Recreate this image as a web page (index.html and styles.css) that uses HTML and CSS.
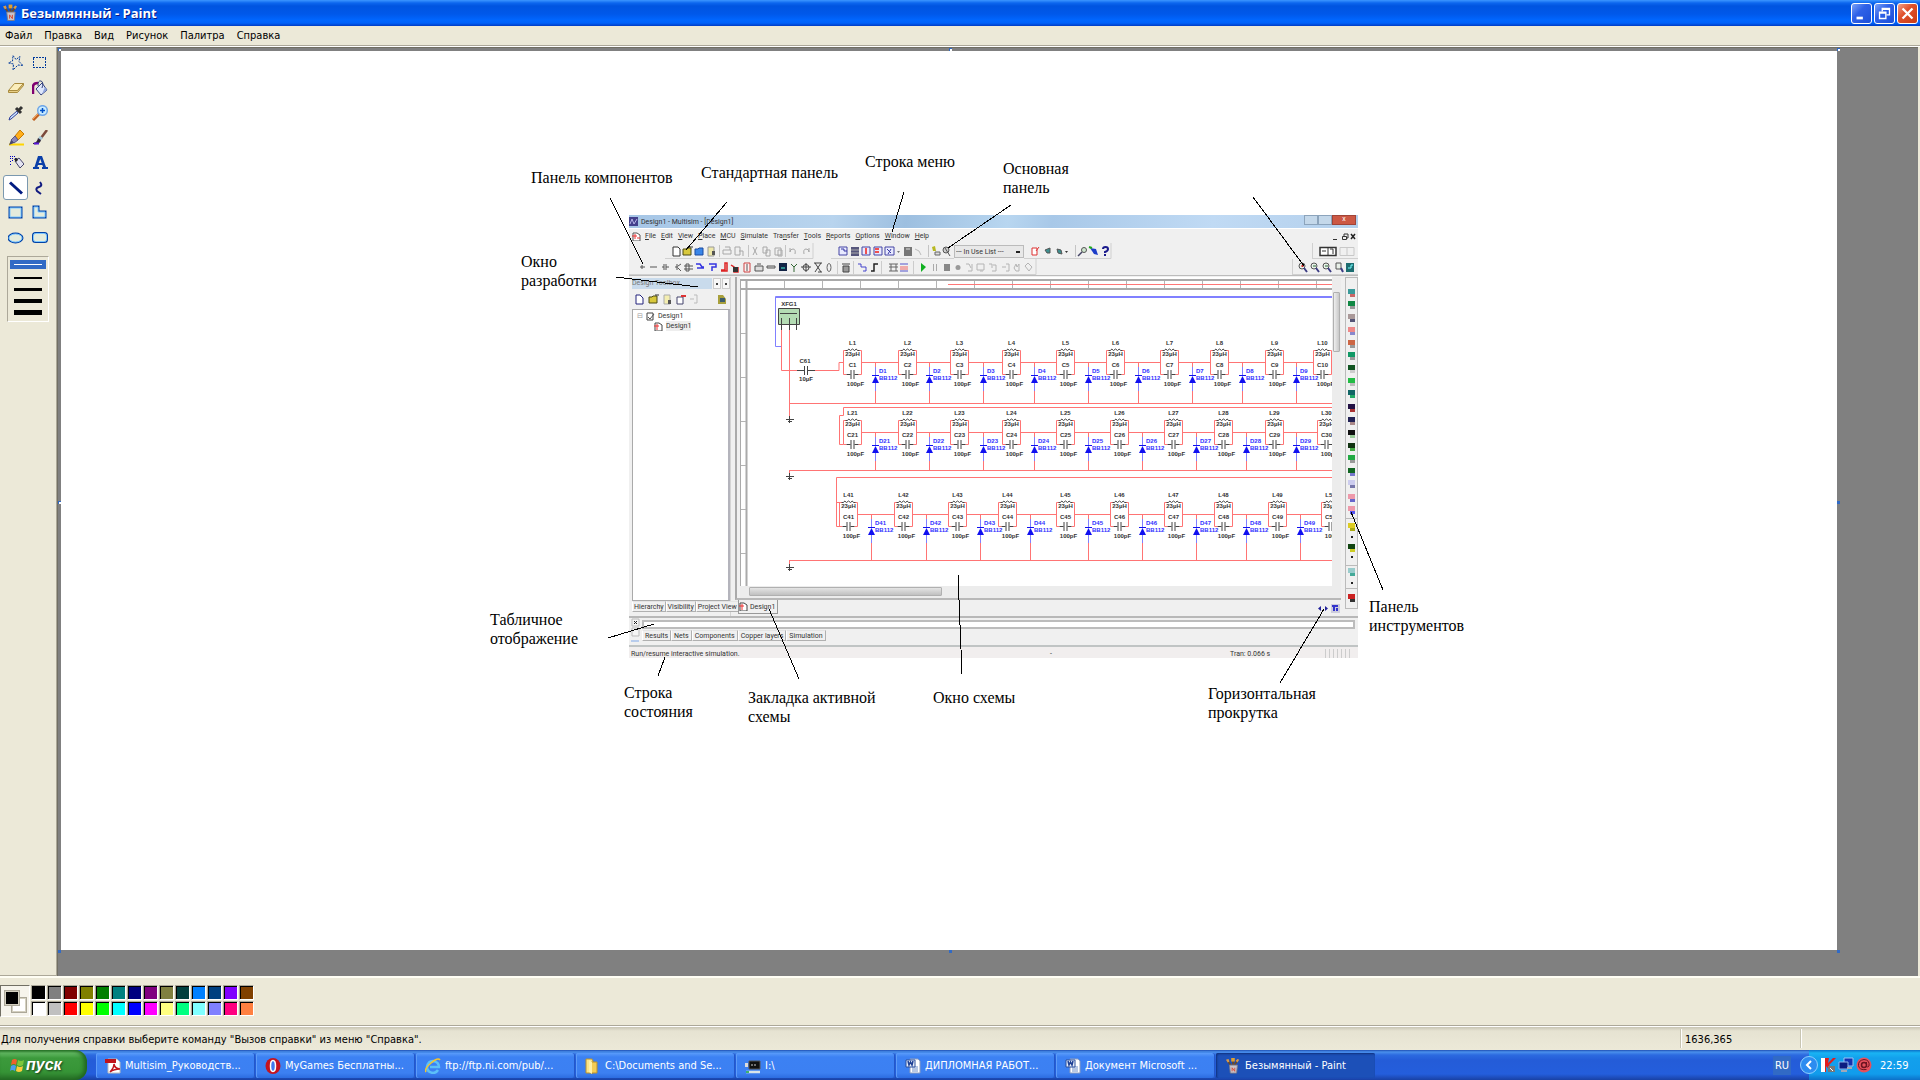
FILE: index.html
```html
<!DOCTYPE html>
<html lang="ru">
<head>
    <meta charset="UTF-8">
    <meta name="viewport" content="width=device-width, initial-scale=1.0">
    <title>Безымянный - Paint</title>
    <link rel="stylesheet" href="styles.css">
</head>
<body>
    <!-- Shared icons -->
    <svg class="defs" aria-hidden="true">
        <symbol id="paint" viewBox="0 0 16 18">
            <path d="M6 9L2 3M8 9V2M9 9l4-6" stroke="#6b4a2c" stroke-width="2"/>
            <path d="M0 2l3-1 1 3-2 1zM11 3l2-2 2 1-2 3z" fill="#d89a4a"/>
            <path d="M6 0h4v4H6z" fill="#e0a030"/>
            <path d="M4 8h9l-1 9H5z" fill="#c8c4cc" stroke="#7c7c88"/>
            <path d="M7 15v-4l3 4v-4" fill="none" stroke="#d8452c" stroke-width="1"/>
        </symbol>
        <symbol id="word" viewBox="0 0 16 16">
            <path d="M5 1h8l2 2v12H5z" fill="#fff" stroke="#8a9cc0"/>
            <path d="M7 9h6M7 11h6M7 13h6" stroke="#6f8fc8"/>
            <path d="M1 2h9v7H1z" fill="#e8eefa" stroke="#2b4f9c"/>
            <path d="M3 3l1 4 1.500-3L7 7l1-4" fill="none" stroke="#1d3f94" stroke-width="1.500"/>
        </symbol>
    </svg>

    <header class="titlebar">
        <svg class="title-icon"><use href="#paint"/></svg>
        <h1>Безымянный - Paint</h1>
        <button class="win-btn" aria-label="Свернуть"><svg viewBox="0 0 21 21"><path d="M5 14h7v3H5z" fill="#fff"/></svg></button>
        <button class="win-btn" aria-label="Восстановить"><svg viewBox="0 0 21 21"><path d="M8 8V5h8v7h-3M5 9h7v7H5zM5 10h7M8 6h8" fill="none" stroke="#fff" stroke-width="1.500"/></svg></button>
        <button class="win-btn close" aria-label="Закрыть"><svg viewBox="0 0 21 21"><path d="M5 5l11 11M16 5L5 16" stroke="#fff" stroke-width="2.500"/></svg></button>
    </header>

    <nav class="menubar">
        <a href="#">Файл</a>
        <a href="#">Правка</a>
        <a href="#">Вид</a>
        <a href="#">Рисунок</a>
        <a href="#">Палитра</a>
        <a href="#">Справка</a>
    </nav>

    <main class="editor">
        <aside class="toolbox">
            <div class="tools">
                <button aria-label="Выделение произвольной области"><svg viewBox="0 0 16 16"><path d="M5 .5l3 4 4-3-1 5 4 4-5-.5-5 5 .5-6-5-1 4-2z" fill="none" stroke="#003a9c" stroke-dasharray="2 1"/></svg></button>
                <button aria-label="Выделение"><svg viewBox="0 0 16 16"><path d="M1 2.500h13M1 12.500h13M1.500 3v10M13.500 3v10" fill="none" stroke="#003a9c" stroke-dasharray="2 1"/></svg></button>
                <button aria-label="Ластик"><svg viewBox="0 0 16 16"><path d="M.5 10.500l6-7h9l-6 7z" fill="#fbeebc" stroke="#a98b3e"/><path d="M.5 10.500v2h9l6-7v-2l-6 7z" fill="#e9cf86" stroke="#a98b3e"/></svg></button>
                <button aria-label="Заливка"><svg viewBox="0 0 16 16"><path d="M1 14V7q0-4 5-4" fill="none" stroke="#800070" stroke-width="2.500"/><path d="M4 9l6-6 5 7-6 5z" fill="#dfe7fb" stroke="#35437c"/><path d="M6 6q0-6 3-5t1 7" fill="none" stroke="#35437c"/><path d="M10 14l5-4-2-3z" fill="#8ea4de"/></svg></button>
                <button aria-label="Выбор цветов"><svg viewBox="0 0 16 16"><path d="M1 15l1-3 7-6 1 2-7 6z" fill="#cfe6ff" stroke="#30409c"/><path d="M8 3l5 5M10 6l4-4" stroke="#333" stroke-width="3"/></svg></button>
                <button aria-label="Масштаб"><svg viewBox="0 0 16 16"><path d="M1 15l6-6" stroke="#c06020" stroke-width="3"/><path d="M1 14l5-5" stroke="#f7a050"/><circle cx="10.500" cy="5.500" r="4.800" fill="#c9ecff" stroke="#6fa6e6" stroke-width="1.500"/><path d="M8 5.500h5M10.500 3v5" stroke="#0050c8" stroke-width="1.500"/></svg></button>
                <button aria-label="Карандаш"><svg viewBox="0 0 16 16"><path d="M1 14.500h15" stroke="#ffd400" stroke-width="2"/><path d="M7 6l5-6 4 4-6 6z" fill="#ffae1a" stroke="#c67a00"/><path d="M3 10l4-4 3 4-4 3z" fill="#8a86b8" stroke="#5a5684"/><path d="M1 15l2-5 3 3z" fill="#4a4870"/></svg></button>
                <button aria-label="Кисть"><svg viewBox="0 0 16 16"><path d="M9 8l6-8" stroke="#7c4a3c" stroke-width="2.500"/><path d="M7 7l3 2" stroke="#a7c8d8" stroke-width="3"/><path d="M1 13q4 0 5-5l3 2q-1 5-8 4z" fill="#2b2438"/><path d="M2 13.500h5" stroke="#5a18d8" stroke-width="2"/></svg></button>
                <button aria-label="Распылитель"><svg viewBox="0 0 16 16"><path d="M2 1h1v1H2zM4 1h1v1H4zM6 1h1v1H6zM2 3h1v1H2zM4 3h1v1H4zM2 6h1v1H2zM4 5h1v1H4zM2 9h1v1H2zM7 3h1v1H7z" fill="#0000c0"/><path d="M7 6l4-3 5 6-4 4z" fill="#e4e4f2" stroke="#44446c"/><path d="M6 4l3-1 1 2-2 2z" fill="#222"/></svg></button>
                <button aria-label="Надпись"><svg viewBox="0 0 16 16"><path d="M6 1h4l4 11h2v2h-6v-2h1l-.6-2H6l-.6 2H7v2H1v-2h1.500zM6.700 8h3L8.300 4z" fill="#0b3fa8" fill-rule="evenodd"/></svg></button>
                <button class="active" aria-label="Линия"><svg viewBox="0 0 16 16"><path d="M2 2.500l12 11" stroke="#001a80" stroke-width="3"/></svg></button>
                <button aria-label="Кривая"><svg viewBox="0 0 16 16"><path d="M8 2q3 4-1 5-4 1-2 4l4 3" fill="none" stroke="#101a80" stroke-width="2"/></svg></button>
                <button aria-label="Прямоугольник"><svg viewBox="0 0 16 16"><path d="M2 3h11v9H2z" fill="none" stroke="#0042a8" stroke-width="3"/><path d="M2 3h11v9H2z" fill="#e4ebdc" stroke="#7ec8ff"/></svg></button>
                <button aria-label="Многоугольник"><svg viewBox="0 0 16 16"><path d="M2 2h4v5h7v5H2z" fill="none" stroke="#0042a8" stroke-width="3"/><path d="M2 2h4v5h7v5H2z" fill="#e4ebdc" stroke="#7ec8ff"/></svg></button>
                <button aria-label="Эллипс"><svg viewBox="0 0 16 16"><ellipse cx="7.500" cy="8" rx="6.500" ry="4" fill="none" stroke="#0042a8" stroke-width="3"/><ellipse cx="7.500" cy="8" rx="6.500" ry="4" fill="#e4ebdc" stroke="#7ec8ff"/></svg></button>
                <button aria-label="Скругленный прямоугольник"><svg viewBox="0 0 16 16"><rect x="1.500" y="3.500" width="13" height="8" rx="2" fill="none" stroke="#0042a8" stroke-width="3"/><rect x="1.500" y="3.500" width="13" height="8" rx="2" fill="#e4ebdc" stroke="#7ec8ff"/></svg></button>
            </div>
            <div class="line-sizes">
                <button class="size size-1 active" aria-label="1"></button>
                <button class="size size-2" aria-label="2"></button>
                <button class="size size-3" aria-label="3"></button>
                <button class="size size-4" aria-label="4"></button>
                <button class="size size-5" aria-label="5"></button>
            </div>
        </aside>

        <div class="workspace">
            <div class="canvas">
                <!-- Pasted Multisim window -->
                <section class="multisim">
                    <div class="ms-title">
                        <svg class="ms-logo" viewBox="0 0 9 9"><path d="M0 0h9v9H0z" fill="#43408c"/><path d="M1 7l2-5 2 5 3-5" fill="none" stroke="#b7b4e8"/></svg>
                        <span>Design1 - Multisim - [Design1]</span>
                        <i></i><i></i><i class="ms-close">x</i>
                    </div>
                    <nav class="ms-menu">
                        <svg class="ms-doc" viewBox="0 0 9 9"><path d="M1 1h4l3 2v6H1z" fill="#fff" stroke="#555"/><path d="M0 4h5M3 2v5M5 6h3" stroke="#e33"/></svg>
                        <a href="#"><u>F</u>ile</a><a href="#"><u>E</u>dit</a><a href="#"><u>V</u>iew</a><a href="#"><u>P</u>lace</a><a href="#"><u>M</u>CU</a><a href="#"><u>S</u>imulate</a><a href="#">Tra<u>n</u>sfer</a><a href="#"><u>T</u>ools</a><a href="#"><u>R</u>eports</a><a href="#"><u>O</u>ptions</a><a href="#"><u>W</u>indow</a><a href="#"><u>H</u>elp</a>
                        <svg class="ms-mdi" viewBox="0 0 24 9"><path d="M1 7.500h4" stroke="#333"/><path d="M10.500 4.500h4v3h-4zM12 4V2h4v4h-1" fill="none" stroke="#333"/><path d="M19 2l4 5M23 2l-4 5" stroke="#222" stroke-width="1.500"/></svg>
                    </nav>
                    <div class="ms-tools">
                        <svg width="325" height="16">
                            <path d="M36 15.500h148V0M202 15.500h123" fill="none" stroke="#d0d0d0"/>
                            <path d="M44 4h5l2 2v7h-7z" fill="#fff" stroke="#333"/>
                            <path d="M54 6h3l1-1h4v7h-8z" fill="#d8c83c" stroke="#4c4a14"/><path d="M60 4h4" stroke="#333"/>
                            <path d="M66 6h3l1-1h4v7h-8z" fill="#3a86e8" stroke="#1a4aa0"/>
                            <path d="M79 4h6v9h-6z" fill="#eee8a8" stroke="#999"/><path d="M83 8h3v4h-3z" fill="#555"/>
                            <path d="M90.500 2v12M119.500 2v12M156.500 2v12M299.500 2v12" stroke="#c4c4c4"/>
                            <path d="M94 7h8v4h-8zM96 4h5v3M106 4h5v8h-5zM110 8h4v5M124 4l4 8M128 4l-4 8M134 4h4v6h-4zM137 7h4v6h-4zM146 5h6v7h-6zM149 7h4v6h-4zM161 5v4q0-3 3-3t2 5M180 5v4q0-3-3-3t-2 5" fill="none" stroke="#a8a8a8"/>
                            <path d="M210 4h8v8h-8zM245 4h8v8h-8zM256 4h9v8h-9zM233 4h8v8h-8z" fill="#e8eaff" stroke="#4444a4"/>
                            <path d="M222 4h8v9h-8z" fill="#56567c"/><path d="M222 7h8M222 10h8" stroke="#aaa"/>
                            <path d="M212 6h3v2h3M258 6l4 4M262 6l-3 5" fill="none" stroke="#3434a0"/><path d="M237 5v6M246 6h4M246 9h4" stroke="#f05050" stroke-width="2"/>
                            <path d="M268 8h3l-1.500 2zM275 4h8v9h-8z" fill="#777"/><path d="M277 6h4" stroke="#ddd"/>
                            <path d="M286 6l4 2 2 4" fill="none" stroke="#bbb"/>
                            <path d="M303 4l3-1 1 5h-3z" fill="#b8b820"/><path d="M306 9h5v3h-5z" fill="#ddd" stroke="#666"/>
                            <circle cx="317" cy="7" r="3" fill="#ccc" stroke="#555"/><path d="M316 5l5 8" stroke="#555"/>
                        </svg>
                        <select aria-label="In Use List"><option>--- In Use List ---</option></select>
                        <svg width="90" height="16">
                            <path d="M0 15.500h87V0" fill="none" stroke="#d0d0d0"/>
                            <path d="M8 5h5v7H8z" fill="#fff" stroke="#d33"/><path d="M12 8l3-4" stroke="#d33"/>
                            <path d="M21 7l5-2v5h-3zM33 6l4 1 1 4-4-1z" fill="#3c9090" stroke="#555"/>
                            <path d="M41 8h3l-1.500 2z" fill="#333"/><path d="M51.500 2v12" stroke="#c4c4c4"/>
                            <circle cx="60" cy="7" r="2.500" fill="#cfe6cf" stroke="#555"/><path d="M58 9l-4 4" stroke="#446" stroke-width="1.500"/>
                            <path d="M66 5l6 1 2 6-4-1z" fill="#1c3cc8"/><path d="M65 4l3 1" stroke="#2a2" stroke-width="2"/>
                            <path d="M79 6q0-2 2.500-2t2.500 2-3 3v1M81 11v2" fill="none" stroke="#1a1a8c" stroke-width="2"/>
                        </svg>
                        <svg class="ms-switch" width="46" height="16">
                            <path d="M0 15.500h46M.5 0v15" stroke="#d0d0d0"/>
                            <path d="M8 4.500h16v8H8z" fill="#fff" stroke="#333" stroke-width="1.500"/><path d="M16 4v8M10 8h4M18 6h3v5" fill="none" stroke="#333"/>
                            <path d="M28 4.500h14v8H28zM35 5v7" fill="none" stroke="#c8c8c8"/>
                        </svg>
                    </div>
                    <div class="ms-tools">
                        <svg width="408" height="17">
                            <path d="M0 15.500h407V0" fill="none" stroke="#d0d0d0"/>
                            <path d="M11 8h5M13 6v4M21 8h7M33 8h2M35 5v6M37 5v6M37 8h3M46 8h3M48 5v6M49 7l3-2M49 9l3 3M55 7h9M55 10h9M57 5v7h3V5z" fill="none" stroke="#555"/>
                            <path d="M67 5h4l2 3h2M68 9h7M80 5h7v3h-4v4" fill="none" stroke="#3434e0" stroke-width="1.500"/>
                            <path d="M92 11h4V4h2v8h-6M102 6l3 2v5h4V8" fill="none" stroke="#d22" stroke-width="1.500"/><path d="M104 8h5v5h-5z" fill="#333"/>
                            <path d="M115 4h6v9h-6z" fill="#fff0f0" stroke="#c44"/><path d="M118 5v7" stroke="#555"/>
                            <path d="M126 7h8v5h-8zM128 5h4M138 7h8v2h-8z" fill="#ddd" stroke="#555"/>
                            <path d="M150 4h8v8h-8z" fill="#124"/><path d="M152 9h4" stroke="#2c8c8c" stroke-width="2"/>
                            <path d="M162 5l3 3 3-3M165 8v5" fill="none" stroke="#363"/><circle cx="177" cy="8.500" r="3" fill="none" stroke="#444"/><path d="M172 8h10M177 4v9M186 4l6 9M192 4l-6 9M185 4h8M189 13h4" stroke="#444"/>
                            <ellipse cx="200" cy="8.500" rx="2" ry="4" fill="none" stroke="#666"/>
                            <path d="M208.500 2v13M224.500 2v13M252.500 2v13M284.500 2v13" stroke="#ccc"/>
                            <path d="M214 7h6v6h-6zM213 5h8" fill="#999" stroke="#444"/><path d="M229 5h3v3h5v4h-3" fill="none" stroke="#44c"/>
                            <path d="M242 12h3V5h4" fill="none" stroke="#222" stroke-width="1.500"/>
                            <path d="M260 5h9M260 8h9M260 12h9M262 5v7M267 5v7" stroke="#666"/><path d="M271 5h8M271 12h8" stroke="#55c"/><path d="M271 8h8M271 10h8" stroke="#e66"/>
                            <path d="M292 4l5 4-5 5z" fill="#10b020"/><path d="M304 5h1v7h-1zM307 5h1v7h-1z" fill="#aaa"/><path d="M315 5h6v7h-6z" fill="#888"/><circle cx="329" cy="8.500" r="2.500" fill="#999"/>
                            <path d="M337 5h3l2 4M343 5v7h-4M348 5h7v6h-7zM351 12h3M360 5h3v4M364 6h3v6h-4M373 8h4M377 5h3v7h-3M385 9l2-4 1 3 2-3v7h-3zM396 7l3-3 4 4-3 4z" fill="none" stroke="#b4b4b4"/>
                        </svg>
                        <svg class="ms-zooms" width="66" height="17">
                            <path d="M0 15.500h66M.5 0v15" stroke="#d0d0d0"/>
                            <g fill="#e8f0e8" stroke="#555"><circle cx="10" cy="7" r="3"/><circle cx="22" cy="7" r="3"/><circle cx="34" cy="7" r="3"/><path d="M44 4h5v6h-5z"/></g>
                            <path d="M12 9l3 4M24 9l3 4M36 9l3 4M49 9l2 4" stroke="#3c3c84" stroke-width="2"/><path d="M9 7h3M10.500 5v3" stroke="#c22"/><path d="M21 7h3M33 7h3" stroke="#2a6c3a"/>
                            <path d="M54 4h8v9h-8z" fill="#1c6c70"/><path d="M56 9h3V6h2" fill="none" stroke="#7ff"/>
                        </svg>
                    </div>

                    <div class="ms-main">
                        <div class="dock">
                            <div class="dock-head"><span>Design Toolbox</span><b></b><b></b></div>
                            <svg class="dock-tools" viewBox="0 0 97 20">
                                <path d="M4 6h4l3 3v6H4z" fill="#fff" stroke="#22227c"/><path d="M17 8h3l1-1h4v7h-8z" fill="#d8c83c" stroke="#4c4a14"/><path d="M23 6h4" stroke="#333"/>
                                <path d="M32 6h6v9h-6z" fill="#f4eeb0" stroke="#aaa"/><path d="M36 11h3v4h-3z" fill="#555"/><path d="M45 8h6v7h-6z" fill="#fff" stroke="#44446c" /><path d="M49 7h5" stroke="#d33" stroke-width="2"/>
                                <path d="M62 6h3v8h-3M58 10h4" fill="none" stroke="#bbb"/><path d="M86 6h5l3 4v5h-8z" fill="#a8a03c"/><path d="M88 9h5v4h-5z" fill="#3c5c6c"/>
                            </svg>
                            <div class="tree">
                                <p><em>⊟</em><svg viewBox="0 0 9 9"><path d="M1 1h6v7H1z" fill="#fff" stroke="#444"/><path d="M2 5l2 2 4-5" fill="none" stroke="#555"/></svg>Design1</p>
                                <p class="leaf"><svg viewBox="0 0 9 9"><path d="M1 1h4l3 2v6H1z" fill="#fff" stroke="#444"/><path d="M0 4h5M3 2v6" stroke="#e33"/></svg><span>Design1</span></p>
                            </div>
                            <div class="ms-tabs"><button class="active">Hierarchy</button><button>Visibility</button><button>Project View</button></div>
                        </div>
                        <div class="doc">
                            <svg id="schematic" viewBox="740 277 592 309" preserveAspectRatio="xMinYMin slice"></svg>
                            <div class="vscroll"><i></i></div>
                            <div class="hscroll"><i></i></div>
                        </div>
                        <svg class="instruments" id="instruments" viewBox="0 0 11 330" preserveAspectRatio="xMinYMin slice"></svg>
                        <div class="doc-tab"><button><svg viewBox="0 0 9 9"><path d="M1 1h4l3 2v6H1z" fill="#fff" stroke="#444"/><path d="M0 4h5M3 2v6" stroke="#e33"/></svg>Design1</button>
                            <svg class="doc-nav" viewBox="0 0 25 9"><path d="M5 2v5L2 4.500zM9 2v5l3-2.500z" fill="#22229c"/><path d="M15 0h9v9h-9z" fill="#ccd"/><path d="M16 2h6M18 2v5M21 4v3" stroke="#33c" stroke-width="2"/></svg>
                        </div>
                    </div>

                    <div class="sheet-view">
                        <svg class="grip" viewBox="0 0 10 26"><path d="M2 1h7v7H2zM2 10h7v8H2z" fill="#f4f4f4" stroke="#bbb"/><path d="M4 3l3 3M7 3L4 6" stroke="#222"/><path d="M1 23h8" stroke="#b8ccec" stroke-width="2"/></svg>
                        <div class="sheet-body">
                            <div class="sheet-row"></div>
                            <div class="ms-tabs"><button class="active">Results</button><button>Nets</button><button>Components</button><button>Copper layers</button><button>Simulation</button></div>
                        </div>
                    </div>
                    <div class="ms-status"><span>Run/resume interactive simulation.</span><span>-</span><span>Tran: 0.066 s</span><span class="meter"></span></div>
                </section>

                <!-- Labels drawn around it -->
                <p class="note n-components">Панель компонентов</p>
                <p class="note n-standard">Стандартная панель</p>
                <p class="note n-menu">Строка меню</p>
                <p class="note n-main">Основная<br>панель</p>
                <p class="note n-design">Окно<br>разработки</p>
                <p class="note n-table">Табличное<br>отображение</p>
                <p class="note n-status">Строка<br>состояния</p>
                <p class="note n-tab">Закладка активной<br>схемы</p>
                <p class="note n-circuit">Окно схемы</p>
                <p class="note n-scroll">Горизонтальная<br>прокрутка</p>
                <p class="note n-tools">Панель<br>инструментов</p>
                <svg class="pointers">
                    <path d="M549 147l33 66M666 151l-41 48M843 141l-12 40M950 154l-63 43M1192 146l51 69M555 226l82 10M547 587l46-14M604 606l-7 19M708 558l30 70M897 524l4 99M1263 558l-44 74M1290 461l32 78"/>
                </svg>
                <i class="handle tl"></i><i class="handle tc"></i><i class="handle tr"></i>
                <i class="handle ml"></i><i class="handle mr"></i>
                <i class="handle bl"></i><i class="handle bc"></i><i class="handle br"></i>
            </div>
        </div>
    </main>

    <section class="palette">
        <div class="current"><i class="back"></i><i class="fore"></i></div>
        <div class="colors" id="colors"></div>
    </section>

    <footer class="statusbar">
        <span class="hint">Для получения справки выберите команду "Вызов справки" из меню "Справка".</span>
        <span class="coords">1636,365</span>
        <span class="extent"></span>
    </footer>

    <div class="taskbar">
        <button class="start">
            <svg viewBox="0 0 16 16"><path d="M2 3q3-2 5 0L6 8Q4 6 1 8z" fill="#f0602c"/><path d="M8 3q3 2 6 0l-1 5q-3 2-6 0z" fill="#7cc83c"/><path d="M1 9q3-2 5 0l-1 5q-3-2-5 0z" fill="#4c9cf0"/><path d="M7 9q3 2 6 0l-1 5q-3 2-6 0z" fill="#fccc3c"/></svg>
            пуск
        </button>
        <div class="tasks">
            <button><svg viewBox="0 0 16 16"><path d="M3 1h9l3 3v11H3z" fill="#fff" stroke="#bbb"/><path d="M0 1h11v4H0z" fill="#c0141c"/><path d="M5 14q4-4 4-8 1 5 6 5-6 0-10 3z" fill="none" stroke="#c0141c" stroke-width="1.500"/></svg><span>Multisim_Руководств...</span></button>
            <button><svg viewBox="0 0 16 16"><ellipse cx="8" cy="8" rx="7.500" ry="8" fill="#c41420"/><ellipse cx="8" cy="8" rx="2.500" ry="5.500" fill="#3f7af0" stroke="#fff" stroke-width="1.500"/></svg><span>MyGames Бесплатны...</span></button>
            <button><svg viewBox="0 0 16 16"><path d="M13 12q-2 3-5 3-6-1-6-6 1-6 6-6 6 1 6 6H5" fill="none" stroke="#5cc0f8" stroke-width="2.500"/><path d="M1 14Q-1 11 6 5t9-3" fill="none" stroke="#f4c430" stroke-width="1.500"/></svg><span>ftp://ftp.ni.com/pub/...</span></button>
            <button><svg viewBox="0 0 16 16"><path d="M1 1h6l1 2v12H1z" fill="#fbe488" stroke="#b8902c"/><path d="M6 4h6v11H6z" fill="#f4cc54" stroke="#b8902c"/><path d="M4 2l3 2v12l-3-2z" fill="#fff0a8"/></svg><span>C:\Documents and Se...</span></button>
            <button><svg viewBox="0 0 16 16"><path d="M4 3h11v8H4z" fill="#111" stroke="#555"/><path d="M0 5h3v4H0z" fill="#ddd"/><path d="M6 7h6" stroke="#ccc" stroke-dasharray="2 1"/><path d="M1 14h14" stroke="#d8e4e8" stroke-width="2.500"/><path d="M1 14h3" stroke="#3cb46c" stroke-width="2"/></svg><span>I:\</span></button>
            <button><svg><use href="#word"/></svg><span>ДИПЛОМНАЯ РАБОТ...</span></button>
            <button><svg><use href="#word"/></svg><span>Документ Microsoft ...</span></button>
            <button class="active"><svg><use href="#paint"/></svg><span>Безымянный - Paint</span></button>
        </div>
        <button class="lang">RU</button>
        <div class="tray">
            <button class="expand" aria-label="Показать значки"><svg viewBox="0 0 18 18"><circle cx="9" cy="9" r="8.500" fill="#2c8cf0" stroke="#8cd0ff"/><path d="M11 5L7 9l4 4" fill="none" stroke="#fff" stroke-width="2"/></svg></button>
            <svg viewBox="0 0 16 16"><path d="M1 1h4v14H1z" fill="#fff"/><path d="M5 1h4L8 6l5-5h3L9 8l6 7h-4L6 9v6H5z" fill="#e01c1c"/><path d="M8 9h7v6H8z" fill="#777"/><path d="M10 11l3 3" stroke="#fff"/></svg>
            <svg viewBox="0 0 16 16"><path d="M6 1h9v8H6z" fill="#1430b0" stroke="#9cc4f4"/><path d="M1 5h9v7H1z" fill="#0c1c80" stroke="#8cb4ec"/><path d="M3 14h6M9 11h5" stroke="#a0a8b8" stroke-width="2"/></svg>
            <svg viewBox="0 0 16 16"><circle cx="8" cy="8" r="7.500" fill="#e8505c"/><circle cx="8" cy="8" r="2.500" fill="none" stroke="#6c1420" stroke-width="1.500"/><path d="M10.500 5v4q1 2 2.500 0 1-6-5-6.500-6 1-5.500 6t8 4" fill="none" stroke="#6c1420"/></svg>
            <time>22:59</time>
        </div>
    </div>
    <script src="script.js"></script>
</body>
</html>
```
FILE: styles.css
```css
* {
    box-sizing: border-box;
}

body {
    margin: 0;
    height: 100vh;
    display: flex;
    flex-direction: column;
    overflow: hidden;
    background-color: #ece9d8;
    color: #000;
    font-family: "DejaVu Sans Condensed", "DejaVu Sans", sans-serif;
    font-size: 11px;
}

button {
    font: inherit;
    color: inherit;
    padding: 0;
    border: none;
    background: none;
}

a {
    color: inherit;
    text-decoration: none;
}

p, h1 {
    margin: 0;
}

svg {
    display: block;
    flex: none;
}

.defs {
    position: absolute;
    width: 0;
    height: 0;
}

/* Title bar */
.titlebar {
    height: 26px;
    flex: none;
    display: flex;
    align-items: center;
    gap: 2px;
    padding: 0 2px 0 3px;
    background: linear-gradient(#3c96ff 0, #0c66ee 3px, #0054e0 6px, #0058ea 14px, #0066ff 20px, #0062fa 23px, #003cc4 26px);
}

.title-icon {
    width: 15px;
    height: 18px;
}

.titlebar h1 {
    flex: 1;
    padding-left: 1px;
    font-family: "Open Sans", sans-serif;
    font-size: 13px;
    line-height: 26px;
    color: #fff;
    text-shadow: 1px 1px #0a1883;
}

.win-btn {
    width: 21px;
    height: 21px;
    border: 1px solid #fff;
    border-radius: 3px;
    background: linear-gradient(135deg, #7ba2f7, #2f62e8 40%, #1c4fd8);
}

.win-btn svg {
    width: 19px;
    height: 19px;
}

.win-btn.close {
    background: linear-gradient(135deg, #f0a18a, #e0512c 40%, #c83c14);
}

/* Menu */
.menubar {
    height: 20px;
    flex: none;
    display: flex;
    gap: 12px;
    padding-left: 5px;
    line-height: 19px;
    border-bottom: 1px solid #aca899;
}

/* Work area */
.editor {
    flex: 1;
    display: flex;
    min-height: 0;
    border-top: 1px solid #fff;
    border-bottom: 2px solid #fffef4;
}

.toolbox {
    width: 57px;
    flex: none;
    padding: 3px 0 0 3px;
    border-right: 1px solid #aca899;
    border-bottom: 1px solid #aca899;
}

.tools {
    display: grid;
    grid-template-columns: 25px 24px;
    grid-auto-rows: 25px;
}

.tools button {
    display: grid;
    place-items: center;
    border: 1px solid transparent;
    border-radius: 3px;
}

.tools button.active {
    background-color: #fff;
    border-color: #7a98af;
}

.tools svg {
    width: 16px;
    height: 16px;
}

.line-sizes {
    width: 42px;
    height: 66px;
    margin: 6px 0 0 4px;
    padding: 3px 2px;
    display: flex;
    flex-direction: column;
    border: 1px solid;
    border-color: #aca899 #fff #fff #aca899;
}

.size {
    height: 12px;
    padding: 0 4px;
}

.size.active {
    height: 10px;
    margin-bottom: 3px;
    color: #fff;
    background-color: #316ac5;
}

.size::before {
    content: "";
    display: block;
    height: 1px;
    background-color: currentColor;
}

.size-2::before { height: 2px; }
.size-3::before { height: 3px; }
.size-4::before { height: 4px; }
.size-5::before { height: 5px; }

.workspace {
    flex: 1;
    display: flex;
    padding: 3px 81px 26px 3px;
    margin-right: 2px;
    background-color: #808080;
    border-top: 1px solid #716f64;
    border-left: 1px solid #716f64;
}

.canvas {
    flex: 1;
    position: relative;
    background-color: #fff;
}

.handle {
    position: absolute;
    width: 3px;
    height: 3px;
    background-color: #fff;
    border: solid #316ac5;
    border-width: 1px 0 0 1px;
}

.tl, .tc, .tr { top: -3px; }
.bl, .bc, .br { bottom: -3px; background-color: #316ac5; }
.ml, .mr { top: 50%; }
.mr { background-color: #316ac5; }
.tl, .ml, .bl { left: -3px; }
.tc, .bc { left: 50%; }
.tr, .mr, .br { right: -3px; }

/* Labels and pointer lines */
.note {
    position: absolute;
    font-family: "Liberation Serif", serif;
    font-size: 16px;
    line-height: 19px;
    white-space: nowrap;
}

.n-components { left: 470px; top: 117px; }
.n-standard { left: 640px; top: 112px; }
.n-menu { left: 804px; top: 101px; }
.n-main { left: 942px; top: 108px; }
.n-design { left: 460px; top: 201px; }
.n-table { left: 429px; top: 559px; }
.n-status { left: 563px; top: 632px; }
.n-tab { left: 687px; top: 637px; }
.n-circuit { left: 872px; top: 637px; }
.n-scroll { left: 1147px; top: 633px; }
.n-tools { left: 1308px; top: 546px; }

.pointers {
    position: absolute;
    left: 0;
    top: 0;
    width: 100%;
    height: 100%;
    fill: none;
    stroke: #000;
    shape-rendering: crispEdges;
}

/* Multisim picture */
.multisim {
    position: absolute;
    left: 568px;
    top: 164px;
    width: 729px;
    height: 443px;
    display: flex;
    flex-direction: column;
    overflow: hidden;
    background-color: #f0f0f0;
    color: #333;
    font-family: Roboto, sans-serif;
    font-size: 7px;
    line-height: 10px;
    white-space: nowrap;
}

.ms-title {
    height: 13px;
    flex: none;
    display: flex;
    align-items: center;
    padding-right: 2px;
    background: linear-gradient(100deg, #a6c6e6 0, #b8d4ee 28%, #9dbfe0 38%, #b8d6f0 52%, #a8c8e8 58%, #c0daf4 80%, #b4d0ec);
}

.ms-logo, .ms-doc {
    width: 9px;
    height: 9px;
    margin-right: 3px;
}

.ms-title span {
    flex: 1;
}

.ms-title i {
    width: 14px;
    height: 10px;
    align-self: flex-start;
    border: 1px solid #8ca4bc;
    background-color: #c4d8ea;
}

.ms-title .ms-close {
    width: 24px;
    border-color: #a04438;
    background-color: #cc5844;
    color: #fff;
    line-height: 7px;
    text-align: center;
    font-style: normal;
}

.ms-menu {
    height: 15px;
    flex: none;
    display: flex;
    align-items: center;
    gap: 5px;
    padding-left: 3px;
    border-top: 1px solid #fff;
}

.ms-doc {
    margin-right: -1px;
}

.ms-mdi {
    width: 24px;
    height: 9px;
    margin: 0 2px 0 auto;
}

.ms-tools {
    height: 16px;
    flex: none;
    display: flex;
}

.ms-tools select {
    appearance: none;
    width: 70px;
    height: 13px;
    margin-top: 2px;
    padding: 0 1px;
    border: 1px solid #bbb;
    background: linear-gradient(#222, #222) right 3px center / 4px 2px no-repeat #e8e8e8;
    font: inherit;
    color: inherit;
}

.ms-switch, .ms-zooms {
    margin-left: auto;
}

.ms-main {
    height: 343px;
    flex: none;
    display: grid;
    grid-template-columns: 102px 1fr 13px;
    grid-template-rows: 1fr 16px;
    column-gap: 4px;
    padding-top: 1px;
    border-top: 1px solid #bcbcbc;
    border-bottom: 2px solid #b8b8b8;
}

.dock {
    grid-row: 1 / 3;
    display: flex;
    flex-direction: column;
    padding: 1px 0 4px 3px;
    border-right: 1px solid #d4d4d4;
}

.dock-head {
    height: 11px;
    flex: none;
    display: flex;
}

.dock-head span {
    flex: 1;
    background-color: #c9dbec;
    color: #777;
}

.dock-head b {
    width: 8px;
    margin-left: 1px;
    border: 1px solid #ccc;
    background: linear-gradient(#444, #444) center / 2px 2px no-repeat #f8f8f8;
}

.dock-tools {
    width: 97px;
    height: 20px;
}

.tree {
    flex: 1;
    padding: 1px 4px;
    background-color: #fff;
    border: 1px solid #aaa;
    border-right: 2px solid #b4b4bc;
}

.tree p {
    display: flex;
    align-items: center;
    gap: 3px;
}

.tree svg {
    width: 9px;
    height: 9px;
}

.tree em {
    color: #999;
    font-style: normal;
}

.tree .leaf {
    padding-left: 17px;
}

.leaf span {
    background-color: #eee;
}

.ms-tabs {
    display: flex;
    flex: none;
}

.ms-tabs button {
    height: 11px;
    padding: 0 2px;
    border: 1px solid #b0b0b0;
    border-top-color: #e4e4e4;
    border-left-color: #fff;
    background-color: #f0f0f0;
    line-height: 8px;
}

.dock .ms-tabs button {
    padding: 0 1px;
}

.doc {
    display: grid;
    grid-template-columns: 1fr 9px;
    grid-template-rows: 1fr 12px;
    padding: 0 0 0 3px;
    border-left: 2px solid #aaa;
    border-bottom: 2px solid #b8b8b8;
    min-width: 0;
    min-height: 0;
}

#schematic {
    width: 100%;
    height: 100%;
    min-height: 0;
    font-family: "Liberation Sans", sans-serif;
    font-size: 6px;
    font-weight: bold;
    text-anchor: middle;
}

.wire { fill: none; stroke: #ff7474; }
.ink { fill: none; stroke: #444; }
.tick { fill: none; stroke: #b4b4b4; }
.blue { fill: none; stroke: #8080ff; }
.part { fill: #333; }
.diode { fill: #1010f0; }
.diode-label { fill: #3030ff; text-anchor: start; }

.vscroll, .hscroll {
    background-color: #ececec;
}

.vscroll {
    padding: 15px 1px;
}

.hscroll {
    grid-column: 1 / 3;
    padding: 1px 9px;
}

.vscroll i, .hscroll i {
    display: block;
    border: 1px solid #b0b0b0;
    border-radius: 1px;
}

.vscroll i {
    height: 60px;
    background: linear-gradient(90deg, #eee, #c8c8c8);
}

.hscroll i {
    width: 193px;
    height: 9px;
    background: linear-gradient(#e4e4e4, #c0c0c0);
}

.instruments {
    width: 13px;
    height: 332px;
    grid-column: 3;
    grid-row: 1 / 3;
    border: 1px solid #bbb;
}

.doc-tab {
    grid-column: 2;
    grid-row: 2;
    display: flex;
    align-items: flex-start;
    justify-content: space-between;
}

.doc-tab button {
    display: flex;
    align-items: center;
    gap: 2px;
    height: 14px;
    margin-left: 3px;
    padding-right: 2px;
    border: 1px solid #999;
    border-top: none;
    background-color: #f0f0f0;
}

.doc-tab button svg {
    width: 9px;
    height: 9px;
}

.doc-nav {
    width: 25px;
    height: 9px;
    margin-top: 4px;
}

.sheet-view {
    height: 29px;
    flex: none;
    display: flex;
    border-bottom: 2px solid #c0c4c4;
}

.grip {
    width: 12px;
    height: 26px;
}

.sheet-body {
    flex: 1;
    padding: 2px 3px 0 1px;
}

.sheet-row {
    height: 9px;
    margin-bottom: 1px;
    border: 2px solid #bcbcbc;
    background-color: #fff;
}

.ms-status {
    flex: 1;
    display: grid;
    grid-template-columns: 419px 180px 95px 28px;
    padding: 2px 0 0 2px;
    background-color: #f1eeee;
}

.meter {
    background: repeating-linear-gradient(90deg, #ccc 0 1px, #f1eeee 1px 4px);
}

/* Palette */
.palette {
    height: 48px;
    flex: none;
    display: flex;
    align-items: flex-start;
    gap: 1px;
    padding-top: 7px;
    border-bottom: 1px solid #aca899;
}

.current {
    position: relative;
    width: 30px;
    height: 32px;
    border: 1px solid;
    border-color: #716f64 #fff #fff #716f64;
    background-color: #f6f4ec;
}

.current i {
    position: absolute;
    width: 14px;
    height: 14px;
    border: 1px solid #d4d0c0;
    outline: 1px solid #aca899;
}

.fore {
    left: 4px;
    top: 5px;
    background-color: #000;
}

.back {
    left: 11px;
    top: 12px;
    background-color: #fff;
}

.colors {
    display: grid;
    grid-template-columns: repeat(14, 16px);
    grid-auto-rows: 16px;
}

.colors button {
    margin: 0 1px 1px 0;
    border: 1px solid;
    border-color: #aca899 #fff #fff #aca899;
    box-shadow: inset 1px 1px #000;
}

/* Status bar */
.statusbar {
    height: 24px;
    flex: none;
    display: flex;
    padding: 2px 0;
    line-height: 22px;
    border-top: 1px solid #fff;
    background: linear-gradient(#c8c5b4 0, #e6e3d2 4px, #ece9d8);
}

.hint {
    flex: 1;
    padding-left: 1px;
}

.coords, .extent {
    width: 120px;
    padding-left: 4px;
    border-left: 1px solid #c8c5b2;
    box-shadow: inset 1px 0 #fff;
}

/* Taskbar */
.taskbar {
    height: 30px;
    flex: none;
    display: flex;
    color: #fff;
    background: linear-gradient(#1f4fb4 0, #4a90ec 2px, #2c6ae0 5px, #245cd8 10px, #245edc 24px, #1941a5 30px);
}

.start {
    width: 87px;
    height: 30px;
    display: flex;
    align-items: center;
    padding-left: 10px;
    border-radius: 0 12px 12px 0;
    background: linear-gradient(#2c7a2c, #62b862 3px, #3c9a3c 8px, #369436 22px, #266e26);
    box-shadow: inset -3px 0 4px #1f641f;
    font-family: "Liberation Sans", sans-serif;
    font-size: 16px;
    font-weight: bold;
    font-style: italic;
    text-shadow: 1px 1px 2px #1a3c1a;
}

.start svg {
    width: 16px;
    height: 16px;
}

.tasks {
    flex: 1;
    display: flex;
    gap: 1px;
    padding: 3px 0 2px 9px;
}

.tasks button {
    width: 159px;
    display: flex;
    align-items: center;
    gap: 4px;
    padding-left: 9px;
    border-radius: 2px;
    background: linear-gradient(#5a9cfa, #3c81f3 4px, #3c80f2 20px, #2c6ce0);
    box-shadow: inset 1px 0 #5e9cf8, inset -1px 0 #2458c8;
    white-space: nowrap;
}

.tasks button.active {
    background: #1c50b8;
    box-shadow: inset 1px 1px 2px #10307c;
}

.tasks svg {
    width: 16px;
    height: 16px;
}

.lang {
    width: 18px;
    height: 19px;
    margin: 6px 18px 0 0;
    background-color: #316ac5;
}

.tray {
    width: 111px;
    display: flex;
    align-items: center;
    gap: 2px;
    background: linear-gradient(#0c70c8, #19b4f4 3px, #12a0ec 8px, #119cec 24px, #0c70c8);
}

.tray svg {
    width: 16px;
    height: 16px;
}

.tray .expand {
    margin-left: -9px;
}

.tray .expand svg {
    width: 18px;
    height: 18px;
}

.tray time {
    padding-left: 6px;
}
```
FILE: script.js
```js
// Palette swatches
const colors = [
    '#000000', '#808080', '#800000', '#808000', '#008000', '#008080', '#000080', '#800080', '#808040', '#004040', '#0080ff', '#004080', '#8000ff', '#804000',
    '#ffffff', '#c0c0c0', '#ff0000', '#ffff00', '#00ff00', '#00ffff', '#0000ff', '#ff00ff', '#ffff80', '#00ff80', '#80ffff', '#8080ff', '#ff0080', '#ff8040'
];
document.getElementById('colors').innerHTML = colors
    .map(c => `<button style="background-color: ${c}" aria-label="${c}"></button>`)
    .join('');

// Three rows of LC cells with a diode after each cell
const rows = [
    { first: 1, y: 0, bus: 403.5, cells: [843, 898, 950, 1002, 1056, 1106, 1160, 1210, 1265, 1313], diodes: [875, 929, 983, 1034, 1088, 1138, 1192, 1242, 1296] },
    { first: 21, y: 70, bus: 470.5, cells: [843, 898, 950, 1002, 1056, 1110, 1164, 1214, 1265, 1317], diodes: [875, 929, 983, 1034, 1088, 1142, 1196, 1246, 1296] },
    { first: 41, y: 152, bus: 560.5, cells: [839, 894, 948, 998, 1056, 1110, 1164, 1214, 1268, 1321], diodes: [871, 926, 980, 1030, 1088, 1142, 1196, 1246, 1300] }
];

function path(cls, d) {
    return `<path class="${cls}" d="${d}"/>`;
}

function label(cls, x, y, text) {
    return `<text class="${cls}" x="${x}" y="${y}">${text}</text>`;
}

function cell(x, y, n) {
    return path('wire', `M${x + 3} ${y + 350.5}H${x}v24h3M${x + 15} ${y + 350.5}h3v24h-3`)
        + path('ink', `M${x + 2} ${y + 350.5}h2q1-3 3 0q2-3 4 0q2-3 3 0h2M${x + 3} ${y + 374.5}h4M${x + 11} ${y + 374.5}h4M${x + 7.5} ${y + 370}v9M${x + 10.5} ${y + 370}v9`)
        + label('part', x + 9, y + 345, 'L' + n)
        + label('part', x + 9, y + 356, '23µH')
        + label('part', x + 9, y + 367, 'C' + n)
        + label('part', x + 12, y + 386, '100pF');
}

function diode(x, y, n, bus) {
    return path('wire', `M${x + .5} ${y + 362}V${bus}`)
        + path('blue', `M${x + .5} ${y + 367}v24`)
        + path('diode', `M${x - 3} ${y + 383}l3-6h1l3 6zM${x - 3} ${y + 375}h7v1h-7z`)
        + label('diode-label', x + 4, y + 373, 'D' + n)
        + label('diode-label', x + 4, y + 380, 'BB112');
}

let out = '<path fill="#fff" d="M739 277h594v310H739z"/>';

// rulers
out += '<path fill="none" stroke="#aaa" stroke-width="2" d="M739 280h594M739 289h594M740 279v307M746.500 279v307"/>';
for (let x = 785; x < 1333; x += 38) out += path('tick', `M${x - .5} 281v7`);
for (let y = 333; y < 586; y += 44) out += path('tick', `M741 ${y + .5}h5`);
out += '<path stroke="#f77" d="M948 284.500h385"/>';

// generator and input wiring
out += path('blue', 'M781.500 346.500h-6V296.500H1333M775.500 297.500H1333');
out += path('wire', 'M781.500 328v42.500h17M814 370.500h25v-8h4M789.500 328v91');
out += '<path fill="#b4dcb4" stroke="#444" d="M778.500 308.500h21v16h-21z"/>';
out += path('ink', 'M797 370.500h7M804.500 366v9M807.500 366v9M808 370.500h7');
out += path('ink', 'M781.500 318v12M789.500 318v12M796.500 318v12M780 313.500h17');
out += label('part', 789, 306, 'XFG1') + label('part', 805, 363, 'C61') + label('part', 806, 381, '10µF');

for (const r of rows) {
    out += path('wire', `M${r.cells[0] + 18} ${r.y + 362.5}H1333M789 ${r.bus}H1333`);
    r.cells.forEach(x => {
        out += `<path fill="#fff" d="M${x} ${r.y + 348}h18v30h-18z"/>`;
    });
    r.cells.forEach((x, i) => { out += cell(x + .5, r.y, r.first + i); });
    r.diodes.forEach((x, i) => { out += diode(x, r.y, r.first + i, r.bus); });
}

out += path('wire', 'M1333 407.500H843.500v8h-4v29h4M1333 477.500H836.500v49h4M836.500 502.500h4M789.500 470v6M789.500 560v6');
for (const y of [419, 476, 567]) out += path('ink', `M786 ${y + .5}h8M788 ${y + 2.5}h4M789.500 ${y - 3}v7`);
document.getElementById('schematic').innerHTML = out;

// Instrument column
const meters = [
    [15, '#3a9a9a', '#c66'], [27, '#184', '#999'], [40, '#a99', '#557'], [53, '#e88', '#88c'], [66, '#c64', '#999'], [78, '#196', '#999'],
    [91, '#152', '#ccc'], [104, '#2b4', '#bbb'], [116, '#166', '#2a6'], [130, '#214', '#a33'], [143, '#225', '#a88'], [156, '#111', '#9c9'],
    [169, '#131', '#4a4'], [181, '#2a4', '#999'], [194, '#162', '#77c'], [206, '#cce', '#77a'], [220, '#e9a', '#66c'], [232, '#e9a', '#55e'],
    [249, '#dc2', '#aa1'], [270, '#141', '#cc2'], [294, '#9cc', '#4a9'], [320, '#c22', '#333']
];
document.getElementById('instruments').innerHTML = meters
    .map(([y, top, bottom]) => `<path fill="${top}" d="M2 ${y - 4}h7v5h-7z"/><path fill="${bottom}" d="M4 ${y + 1}h5v3h-5z"/>`)
    .join('') + '<path fill="#222" d="M5 258h2v2h-2zM5 278h2v2h-2zM5 304h2v2h-2z"/><path stroke="#bbb" d="M0 240.500h12M0 287.500h12M0 310.500h12"/>';
```
